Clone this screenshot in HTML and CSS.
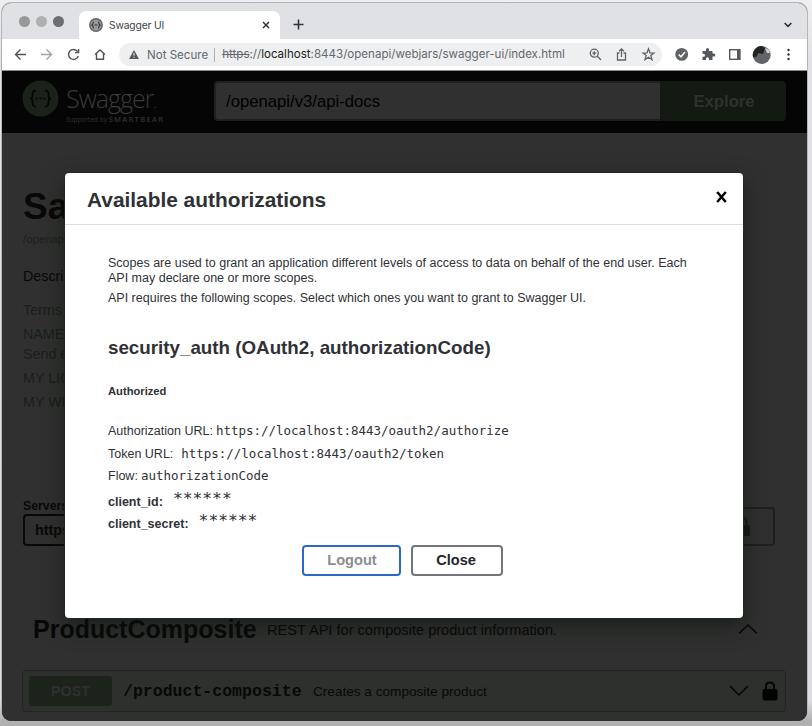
FILE: index.html
```html
<!DOCTYPE html>
<html lang="en">
<head>
<meta charset="utf-8">
<title>Swagger UI</title>
<link rel="stylesheet" href="styles.css">
</head>
<body>
<div class="window">
  <div class="tabs">
    <div class="lights"><i class="l1"></i><i class="l2"></i><i class="l3"></i></div>
    <div class="tab">
      <svg class="favicon" width="14" height="14" viewBox="0 0 14 14"><circle cx="7" cy="7" r="6.2" fill="#999" stroke="#606366" stroke-width="1.4"/><path d="M5 4Q4 4 4 5.200T3 7Q4 7.200 4 8.600T5 10M9 4Q10 4 10 5.200T11 7Q10 7.200 10 8.600T9 10M5.500 7H8.500" fill="none" stroke="#333" stroke-width="1.100"/></svg>
      <span class="tab-title">Swagger UI</span>
      <svg class="tab-x" width="8" height="8" viewBox="0 0 8 8"><path d="M1 1L7 7M7 1L1 7" stroke="#333" stroke-width="1.500"/></svg>
    </div>
    <svg class="plus" width="11" height="11" viewBox="0 0 11 11"><path d="M5.500 .5V10.500M.5 5.500H10.500" stroke="#333" stroke-width="1.600"/></svg>
    <svg class="tab-menu" width="8" height="6" viewBox="0 0 8 6"><path d="M.7 1L4 4.500L7.300 1" fill="none" stroke="#222" stroke-width="1.500"/></svg>
  </div>
  <div class="toolbar">
    <svg width="108" height="31" viewBox="0 0 108 31" fill="none" stroke="#505357" stroke-width="1.400">
      <path d="M13.500 15.500H24M18.500 10.500L13.500 15.500L18.500 20.500"/>
      <path d="M39 15.500H49.500M44.500 10.500L49.500 15.500L44.500 20.500" stroke="#a3a3a5"/>
      <path d="M75.600 12.500A5 5 0 1 0 76.300 17M76.600 10V13.600H73"/>
      <path d="M93 15.500L98 11L103 15.500M94.500 14.500V20.300H101.500V14.500"/>
    </svg>
    <div class="address">
      <svg width="10" height="9" viewBox="0 0 10 9"><path d="M5 0L10 9H0Z" fill="#55585b"/><path d="M5 3V5.800M5 6.700V7.800" stroke="#eee"/></svg>
      <span class="ns">Not Secure</span><span class="url"><s>https</s>://<b>localhost</b>:8443/openapi/webjars/swagger-ui/index.html</span>
      <svg class="addr-icons" width="70" height="23" viewBox="0 0 70 23" fill="none" stroke="#606367" stroke-width="1.300">
        <circle cx="7.300" cy="10.200" r="4"/><path d="M10.300 13.200L14 17M5.300 10.200H9.300M7.300 8.200V12.200"/>
        <path d="M32.500 10H30.500V17H38.500V10H36.500M34.500 14V6M32 8.300L34.500 5.800L37 8.300"/>
        <path d="M61.500 5.800L63 9.800L67 10L63.800 12.600L65 16.700L61.500 14.300L58 16.700L59.200 12.600L56 10L60 9.800Z"/>
      </svg>
    </div>
    <svg class="ext" width="140" height="31" viewBox="665 0 140 31">
      <circle cx="679.700" cy="15.400" r="6.400" fill="#606468"/><path d="M676.700 15.500L679 17.800L683 13" fill="none" stroke="#fff" stroke-width="1.500"/>
      <path d="M701 12H704.500V10.500A1.500 1.500 0 0 1 707.500 10.500V12H711V14.500H712.300A1.500 1.500 0 0 1 712.300 17.500H711V21H707.500V19.700A1.500 1.500 0 0 0 704.500 19.700V21H701V17.800H702A1.500 1.500 0 0 0 702 14.800H701Z" fill="#55585c" transform="translate(-.5 0)"/>
      <rect x="727.700" y="10.700" width="10" height="9.600" fill="none" stroke="#55585c" stroke-width="1.400"/><path d="M735 10H738.400V21H735Z" fill="#55585c"/>
      <circle cx="759.700" cy="16" r="9" fill="#626468"/><path d="M759.700 7A9 9 0 0 0 751 18Q753 19 755 17L756 14L761 15L763 9Z" fill="#202420"/><path d="M763 9Q767 10 768 14L765 14Z" fill="#d0d0d2"/>
      <g fill="#333"><circle cx="786.500" cy="11" r="1.200"/><circle cx="786.500" cy="15.500" r="1.200"/><circle cx="786.500" cy="20" r="1.200"/></g>
    </svg>
  </div>
  <div class="page">
    <div class="topbar">
      <svg class="logo" width="37" height="37" viewBox="0 0 37 37"><circle cx="18.500" cy="18.500" r="18" fill="#1b221b"/><path d="M14 10.500Q10.500 10.500 10.500 14V16Q10.500 18.500 8 18.500Q10.500 18.500 10.500 21V23Q10.500 26.500 14 26.500M23 10.500Q26.500 10.500 26.500 14V16Q26.500 18.500 29 18.500Q26.500 18.500 26.500 21V23Q26.500 26.500 23 26.500" fill="none" stroke="#050505" stroke-width="1.700"/><path d="M13.500 18.500H15.500M17.500 18.500H19.500M21.500 18.500H23.500" stroke="#050505" stroke-width="1.700"/></svg>
      <div class="brand"><div class="name">Swagger<small>.</small></div><div class="sub"><span>Supported by</span> <b>SMARTBEAR</b></div></div>
      <div class="search"><span>/openapi/v3/api-docs</span></div>
      <div class="explore"><span>Explore</span></div>
    </div>
    <div class="info">
      <h1>Sa</h1>
      <p class="spec">/openap</p>
      <p class="desc">Descri</p>
      <p class="terms">Terms</p>
      <p>NAME</p>
      <p class="send">Send e</p>
      <p>MY LIC</p>
      <p>MY WE</p>
    </div>
    <div class="servers">
      <div><label>Servers</label><div class="select">https</div></div>
      <div class="auth"><svg width="16" height="22" viewBox="0 0 16 22"><path d="M3.500 10V6Q3.500 1.500 7.500 1.500Q11.500 1.500 11.500 6V10" fill="none" stroke="#1b211b" stroke-width="2.500"/><rect x="0" y="9" width="15" height="11" rx="2" fill="#151b15"/></svg></div>
    </div>
    <div class="group">
      <span class="gname">ProductComposite</span><span class="gdesc">REST API for composite product information.</span>
      <svg width="20" height="11" viewBox="0 0 20 11"><path d="M1 9.500L10 1L19 9.500" fill="none" stroke="#050505" stroke-width="1.500"/></svg>
    </div>
    <div class="op">
      <span class="post"><span>POST</span></span><span class="path">/product-composite</span><span class="odesc">Creates a composite product</span>
      <svg class="down" width="20" height="12" viewBox="0 0 20 12"><path d="M1 1L10 10L19 1" fill="none" stroke="#050505" stroke-width="1.500"/></svg>
      <svg width="16" height="20" viewBox="0 0 16 20"><path d="M4 9V5.500Q4 1.500 8 1.500Q12 1.500 12 5.500V9" fill="none" stroke="#050505" stroke-width="2"/><rect x=".5" y="8" width="15" height="11.500" rx="2" fill="#020202"/></svg>
    </div>
  </div>
  <div class="modal">
    <div class="mhead"><h2><span>Available authorizations</span></h2><svg width="11" height="12" viewBox="0 0 11 12"><path d="M1.200 1L9.800 11M9.800 1L1.200 11" stroke="#000" stroke-width="2.500"/></svg></div>
    <div class="mbody">
      <p class="t1">Scopes are used to grant an application different levels of access to data on behalf of the end user. Each<br>API may declare one or more scopes.</p>
      <p class="t2">API requires the following scopes. Select which ones you want to grant to Swagger UI.</p>
      <h3>security_auth (OAuth2, authorizationCode)</h3>
      <h4>Authorized</h4>
      <div class="row r1"><span>Authorization URL:</span><code>https://localhost:8443/oauth2/authorize</code></div>
      <div class="row r2"><span>Token URL:</span><code>https://localhost:8443/oauth2/token</code></div>
      <div class="row r3"><span>Flow:</span><code>authorizationCode</code></div>
      <div class="row r4"><b>client_id:</b><code>******</code></div>
      <div class="row r5"><b>client_secret:</b><code>******</code></div>
      <div class="buttons"><button class="logout">Logout</button><button class="close">Close</button></div>
    </div>
  </div>
</div>
</body>
</html>
```
FILE: styles.css
```css
* { box-sizing: border-box; }
body { margin: 0; width: 812px; height: 726px; overflow: hidden; padding: 3px 5px 5px 2px; background: linear-gradient(#efeff1 0, #e2e2e6 60px, #dcdce1 700px, #b0b0b0 721px); font-family: "Liberation Sans", Arial, sans-serif; white-space: nowrap; }
h1, h2, h3, h4, p { margin: 0; }
svg { display: block; flex: none; }
.window { position: relative; width: 805px; height: 718px; border-radius: 9px; overflow: hidden; background: #303030; box-shadow: 0 0 0 1px #b4b5b8; }
.tabs { height: 36px; background: #e0e1e5; display: flex; }
.lights { display: flex; gap: 6px; padding: 13px 0 0 17px; width: 77px; }
.lights i { width: 11px; height: 11px; border-radius: 50%; background: #999; }
.lights .l2 { background: #b0b0b1; }
.lights .l3 { background: #6c6e73; }
.tab { width: 201px; height: 28px; margin-top: 8px; border-radius: 7px 7px 0 0; background: #fff; display: flex; align-items: center; padding: 0 10px; }
.tab-title { margin-left: 6px; font: 11px Roboto, sans-serif; color: #404246; letter-spacing: -.15px; }
.tab-title { font-family: Inter, sans-serif; font-size: 10.300px; }
.tab-x { margin-left: auto; }
.plus { margin: 16px 0 0 13px; }
.tab-menu { margin: 19px 15px 0 auto; }
.toolbar { height: 32px; background: #fff; border-bottom: 1px solid #8a8b8e; display: flex; }
.address { margin: 4px 0 0 9px; width: 543px; height: 23px; border-radius: 12px; background: #eeeff1; display: flex; align-items: center; padding-left: 10px; font: 11.570px/23px Inter, sans-serif; color: #65686c; }
.ns { margin-left: 8px; padding-right: 6px; border-right: 1px solid #b0b0b3; line-height: 14px; }
.url { margin-left: 7px; }
.url b { font-weight: 400; color: #222; }
.addr-icons { margin-left: auto; margin-right: 5px; }
.ext { margin-left: auto; }
.page { height: 650px; background: #303030; color: #080808; }
.topbar { height: 62px; background: #050505; display: flex; padding-left: 20px; }
.logo { margin-top: 9px; }
.brand { width: 155px; padding: 13px 0 0 7px; color: #383b38; }
.name { font: 300 25px/28px "Open Sans", sans-serif; letter-spacing: -1px; }
.name small { font-size: 14px; }
.sub { font: 6.500px/8px "Open Sans", sans-serif; margin-top: -2px; color: #303330; }
.sub b { font-size: 7.500px; letter-spacing: 1.300px; font-weight: 600; }
.search { width: 446px; height: 40px; margin-top: 10px; border: 2px solid #1c231c; border-right: 0; background: #303030; border-radius: 4px 0 0 4px; padding-left: 10px; font-size: 16.700px; line-height: 37px; color: #000; }
.explore { width: 126px; height: 40px; margin-top: 10px; background: #121a12; border-radius: 0 4px 4px 0; text-align: center; font-weight: bold; font-size: 16.700px; line-height: 41px; padding-left: 2px; color: #303030; }
.info { height: 357px; padding: 52px 0 0 21px; font-size: 14.300px; color: #191f19; }
.info p { height: 24px; line-height: 24px; }
.info h1 { font-size: 37px; line-height: 43px; height: 42px; color: #080808; }
.info .spec { font-size: 11.300px; height: 24px; line-height: 24px; }
.info .desc { margin-top: 13px; height: 22px; line-height: 24px; color: #080808; }
.info .terms { margin-top: 12px; }
.info .send { margin-top: -4px; }
.servers { height: 68px; padding: 9px 32px 0 21px; display: flex; justify-content: space-between; }
.servers label { display: block; font-size: 12.300px; font-weight: bold; line-height: 14px; }
.select { width: 130px; height: 32px; margin-top: 1px; border: 2px solid #080808; border-radius: 4px; padding-left: 10px; font-size: 14.400px; font-weight: bold; line-height: 28px; }
.auth { width: 100px; height: 39px; margin-top: 8px; border: 2px solid #1b211b; border-radius: 4px; padding: 7px 0 0 58px; }
.group { margin-top: 47px; height: 49px; padding: 0 49px 0 31px; display: flex; align-items: center; }
.gname { width: 234px; font-size: 25px; font-weight: bold; }
.gdesc { font-size: 14.600px; }
.group svg { margin-left: auto; margin-top: -1px; }
.op { height: 42px; margin: 16px 21px 0 20px; border: 1px solid #1f251f; border-radius: 4px; background: #2d302d; display: flex; align-items: center; padding: 0 7px 0 6px; }
.post { width: 83px; height: 30px; background: #1b231b; border-radius: 3px; color: #303030; text-align: center; font-size: 14.300px; line-height: 30px; font-weight: bold; }
.path { width: 201px; padding-left: 11px; font: bold 16.550px "Liberation Mono", monospace; }
.odesc { font-size: 13.600px; }
.down { margin-left: auto; margin-right: 13px; }
.modal { position: absolute; left: 63px; top: 170px; width: 678px; height: 445px; background: #fff; border-radius: 4px; box-shadow: 0 0 0 1px #222822, 0 8px 22px rgba(10,20,10,.6); color: #303136; }
.mhead { height: 52px; border-bottom: 1px solid #dcdddf; display: flex; justify-content: space-between; padding: 0 16px 0 22px; }
.mhead h2 { font-size: 20.870px; line-height: 53px; }
.mhead svg { margin-top: 18px; }
.mbody { padding: 31px 43px 0; font-size: 12.500px; line-height: 15px; }
.t2 { margin-top: 5px; }
.mbody h3 { margin-top: 30px; font-size: 18.780px; line-height: 24px; }
.mbody h4 { margin-top: 24px; font-size: 11.200px; line-height: 14px; }
.row { display: flex; height: 22px; line-height: 22px; font-size: 12.500px; }
.row code { font-family: "DejaVu Sans Mono", monospace; font-size: 12.480px; margin-left: 3px; }
.r1 { margin-top: 22px; height: 23px; }
.r2 code { margin-left: 8px; }
.r4 { margin-top: 4px; }
.r4 code, .r5 code { font-size: 16.300px; margin-left: 10px; line-height: 16px; }
.buttons { display: flex; gap: 10px; margin: 10px 0 0 194px; }
button { height: 31px; border: 2px solid #74757a; border-radius: 4px; background: #fff; font: bold 14.600px "Liberation Sans", sans-serif; color: #25262a; padding: 0 2px 2px 0; width: 92px; }
.logout { width: 99px; border-color: #2f67c6; color: #8c8d90; padding-left: 3px; }
```
